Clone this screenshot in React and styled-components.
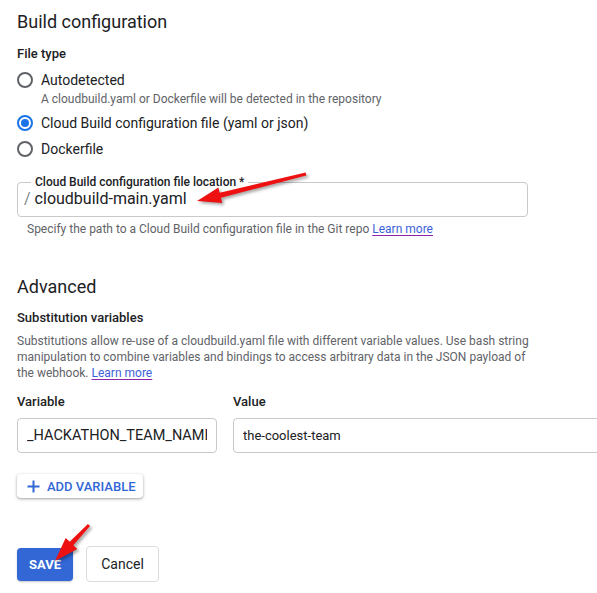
import React from "react";
import styled, { createGlobalStyle } from "styled-components";

const Global = createGlobalStyle`
  html, body { margin: 0; padding: 0; background: #fff; overflow: hidden; }
  body { font-family: Roboto, "Noto Sans", Arial, sans-serif; color: #202124; }
  * { box-sizing: border-box; }
`;

const Page = styled.div`
  position: relative;
  width: 597px;
  height: 593px;
  overflow: hidden;
  padding: 0 0 0 17px;
`;

const Title = styled.h2`
  margin: ${(p) => p.$mt}px 0 0;
  font-size: 18px;
  line-height: 24px;
  font-weight: 400;
  color: #202124;
`;

const SubLabel = styled.div`
  margin-top: ${(p) => p.$mt}px;
  font-size: 13px;
  line-height: 16px;
  font-weight: 500;
  color: #202124;
`;

const RadioGroup = styled.div`
  margin-top: 8px;
  display: flex;
  flex-direction: column;
  gap: 6px;
`;

const RadioOption = styled.label`
  display: grid;
  grid-template-columns: 24px auto;
  align-items: center;
  row-gap: 1px;
`;

const RadioCircle = styled.span`
  width: 16px;
  height: 16px;
  border-radius: 50%;
  border: 2px solid ${(p) => (p.$checked ? "#1a73e8" : "#5f6368")};
  display: flex;
  align-items: center;
  justify-content: center;
  &::after {
    content: "";
    width: 8px;
    height: 8px;
    border-radius: 50%;
    background: ${(p) => (p.$checked ? "#1a73e8" : "transparent")};
  }
`;

const RadioText = styled.span`
  font-size: 14px;
  line-height: 20px;
  color: #202124;
`;

const RadioHint = styled.span`
  grid-column: 2;
  font-size: 12px;
  line-height: 16px;
  color: #5f6368;
`;

const Outlined = styled.fieldset`
  margin: 16px 0 0;
  padding: 0 0 7px 6px;
  width: 511px;
  border: 1px solid #c9c9c9;
  border-radius: 4px;
  min-width: 0;
`;

const Legend = styled.legend`
  margin-left: 7px;
  padding: 0 4px;
  font-size: 12px;
  line-height: 14px;
  font-weight: 500;
  color: #202124;
`;

const InputText = styled.div`
  display: flex;
  align-items: center;
  font-size: 16px;
  line-height: 20px;
`;

const Prefix = styled.span`
  color: #80868b;
  margin-right: 4px;
`;

const Helper = styled.div`
  margin-top: ${(p) => p.$mt ?? 4}px;
  padding-left: ${(p) => p.$pl || 0}px;
  font-size: 12px;
  line-height: 16px;
  color: #5f6368;
  max-width: ${(p) => p.$mw || 600}px;
`;

const Link = styled.a`
  color: #3c5fd9;
  text-decoration: underline;
  text-decoration-color: #8e24aa;
  text-underline-offset: 2px;
`;

const VarGrid = styled.div`
  margin-top: 13px;
  display: grid;
  grid-template-columns: 200px 400px;
  column-gap: 16px;
  row-gap: 8px;
`;

const TextBox = styled.div`
  height: 35px;
  border: 1px solid #c9c9c9;
  border-radius: 4px;
  padding: 0 9px;
  display: flex;
  align-items: center;
  color: #202124;
`;

const BoxValue = styled.span`
  display: block;
  flex: 1;
  min-width: 0;
  overflow: hidden;
  white-space: nowrap;
  font-size: ${(p) => p.$size}px;
  line-height: 20px;
`;

const AddButton = styled.button`
  margin-top: 21px;
  display: flex;
  align-items: center;
  gap: 7px;
  height: 24px;
  width: 126px;
  padding: 0 0 0 10px;
  border: none;
  border-radius: 4px;
  background: #fff;
  box-shadow: 0 1px 2px rgba(60, 64, 67, 0.3), 0 1px 3px 1px rgba(60, 64, 67, 0.15);
  font-family: inherit;
  font-size: 13px;
  font-weight: 500;
  color: #3367d6;
`;

const ActionRow = styled.div`
  margin-top: 48px;
  display: flex;
  align-items: center;
  gap: 13px;
`;

const PrimaryButton = styled.button`
  height: 33px;
  width: 56px;
  border: none;
  border-radius: 4px;
  background: #3367d6;
  color: #fff;
  font-family: inherit;
  font-size: 13px;
  font-weight: 700;
  box-shadow: 0 1px 2px rgba(60, 64, 67, 0.3);
`;

const SecondaryButton = styled.button`
  height: 36px;
  width: 73px;
  border: 1px solid #dadce0;
  border-radius: 4px;
  background: #fff;
  color: #202124;
  font-family: inherit;
  font-size: 14px;
`;

const Overlay = styled.svg`
  position: absolute;
  left: 0;
  top: 0;
  pointer-events: none;
`;

function Arrow({ x1, y1, x2, y2 }) {
  const dx = x2 - x1;
  const dy = y2 - y1;
  const len = Math.hypot(dx, dy);
  const ux = dx / len;
  const uy = dy / len;
  const px = -uy;
  const py = ux;
  const head = 24;
  const hw = 8;
  const bx = x2 - ux * head;
  const by = y2 - uy * head;
  const pts = [
    [x1 + px * 1.5, y1 + py * 1.5],
    [bx + px * 2.5, by + py * 2.5],
    [bx + px * hw, by + py * hw],
    [x2, y2],
    [bx - px * hw, by - py * hw],
    [bx - px * 2.5, by - py * 2.5],
    [x1 - px * 1.5, y1 - py * 1.5],
  ]
    .map((p) => p.join(","))
    .join(" ");
  return <polygon points={pts} fill="#ee1111" />;
}

export default function App() {
  return (
    <>
      <Global />
      <Page>
        <Title $mt={10}>Build configuration</Title>
        <SubLabel $mt={12}>File type</SubLabel>
        <RadioGroup>
          <RadioOption>
            <RadioCircle />
            <RadioText>Autodetected</RadioText>
            <RadioHint>A cloudbuild.yaml or Dockerfile will be detected in the repository</RadioHint>
          </RadioOption>
          <RadioOption>
            <RadioCircle $checked />
            <RadioText>Cloud Build configuration file (yaml or json)</RadioText>
          </RadioOption>
          <RadioOption>
            <RadioCircle />
            <RadioText>Dockerfile</RadioText>
          </RadioOption>
        </RadioGroup>

        <Outlined>
          <Legend>Cloud Build configuration file location *</Legend>
          <InputText>
            <Prefix>/</Prefix>
            cloudbuild-main.yaml
          </InputText>
        </Outlined>
        <Helper $pl={10}>
          Specify the path to a Cloud Build configuration file in the Git repo <Link>Learn more</Link>
        </Helper>

        <Title $mt={38}>Advanced</Title>
        <SubLabel $mt={11}>Substitution variables</SubLabel>
        <Helper $mw={518} $mt={7}>
          Substitutions allow re-use of a cloudbuild.yaml file with different variable values. Use bash string
          manipulation to combine variables and bindings to access arbitrary data in the JSON payload of the
          webhook. <Link>Learn more</Link>
        </Helper>

        <VarGrid>
          <SubLabel $mt={0}>Variable</SubLabel>
          <SubLabel $mt={0}>Value</SubLabel>
          <TextBox>
            <BoxValue $size={14.5}>_HACKATHON_TEAM_NAME</BoxValue>
          </TextBox>
          <TextBox>
            <BoxValue $size={13}>the-coolest-team</BoxValue>
          </TextBox>
        </VarGrid>

        <AddButton>
          <svg width="13" height="13" viewBox="0 0 13 13">
            <path d="M6.5 0.5v12M0.5 6.5h12" stroke="#3367d6" strokeWidth="2" />
          </svg>
          ADD VARIABLE
        </AddButton>

        <ActionRow>
          <PrimaryButton>SAVE</PrimaryButton>
          <SecondaryButton>Cancel</SecondaryButton>
        </ActionRow>

        <Overlay width="597" height="593" viewBox="0 0 597 593">
          <g style={{ filter: "drop-shadow(2px 2px 1.5px rgba(0,0,0,0.35))" }}>
            <Arrow x1={306} y1={174} x2={197} y2={201} />
            <Arrow x1={89} y1={525} x2={55} y2={561} />
          </g>
        </Overlay>
      </Page>
    </>
  );
}
